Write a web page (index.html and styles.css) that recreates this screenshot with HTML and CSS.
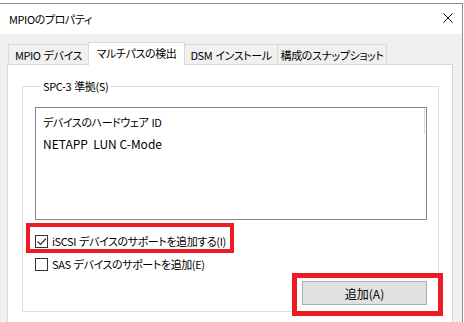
FILE: index.html
```html
<!DOCTYPE html>
<html lang="ja">
<head>
  <meta charset="UTF-8">
  <title>MPIOのプロパティ</title>
  <link rel="stylesheet" href="styles.css">
</head>
<body>
  <div class="window">
    <div class="titlebar">
      <span class="title">MPIOのプロパティ</span>
      <svg class="close" width="10" height="10" viewBox="0 0 10 10">
        <path d="M0.5 0.5 L9.5 9.5 M9.5 0.5 L0.5 9.5" stroke="#111" stroke-width="1" fill="none"/>
      </svg>
    </div>
    <div class="client">
      <div class="tabs">
        <div class="tab t1">MPIO デバイス</div>
        <div class="tab t2 active">マルチパスの検出</div>
        <div class="tab t3">DSM インストール</div>
        <div class="tab t4">構成のスナップショット</div>
      </div>
      <div class="panel">
        <fieldset class="group">
          <legend>SPC-3 準拠(S)</legend>
          <div class="listbox">
            <div class="item">デバイスのハードウェア ID</div>
            <div class="item latin">NETAPP&nbsp; LUN C-Mode</div>
          </div>
          <label class="check first">
            <span class="box">
              <svg width="11" height="11" viewBox="0 0 11 11">
                <path d="M1.5 5.5 L4.5 8.5 L10 2.5" stroke="#333" stroke-width="1.2" fill="none"/>
              </svg>
            </span>
            iSCSI デバイスのサポートを追加する(I)
          </label>
          <label class="check">
            <span class="box"></span>
            SAS デバイスのサポートを追加(E)
          </label>
          <div class="actions">
            <button class="btn">追加(A)</button>
          </div>
        </fieldset>
        <!-- red annotation boxes -->
        <div class="mark mark-check"></div>
        <div class="mark mark-btn"></div>
      </div>
    </div>
  </div>
</body>
</html>
```

FILE: styles.css
```css
body {
  margin: 0;
  width: 464px;
  height: 322px;
  overflow: hidden;
  background: #fff;
  color: #000;
  font-family: "Noto Sans CJK JP", "Noto Sans", sans-serif;
  font-size: 11px;
  font-feature-settings: "palt";
  letter-spacing: -0.4px;
  word-spacing: 1px;
}
.window {
  margin-top: 3px;
  width: 463px;
  height: 319px;
  box-sizing: border-box;
  border-top: 1px solid #8c8c8c;
  border-right: 1px solid #8c8c8c;
  display: flex;
  flex-direction: column;
}
.titlebar {
  height: 30px;
  background: #fff;
  display: flex;
  align-items: center;
  padding-left: 9px;
}
.title {
  line-height: 16px;
  margin-top: -1px;
}
.close {
  margin-left: auto;
  margin-right: 9px;
  margin-top: -2px;
}
.client {
  flex: 1;
  background: #f0f0f0;
  padding: 8px 9px 0 7px;
  display: flex;
  flex-direction: column;
}
.tabs {
  display: flex;
  align-items: flex-end;
  height: 22px;
  padding-left: 1px;
}
.tab {
  height: 20px;
  box-sizing: border-box;
  border: 1px solid #d9d9d9;
  border-bottom: none;
  margin-right: -1px;
  background: #f0f0f0;
  display: flex;
  align-items: center;
  justify-content: center;
  white-space: nowrap;
  line-height: 16px;
}
.t1 { width: 81px; }
.t2 { width: 97px; }
.t3 { width: 94px; }
.t4 { width: 110px; }
.tab.active {
  height: 23px;
  margin-bottom: -1px;
  padding-bottom: 3px;
  background: #fff;
  position: relative;
  z-index: 1;
}
.panel {
  flex: 1;
  position: relative;
  background: #fff;
  border: 1px solid #d9d9d9;
  border-bottom: none;
}
.group {
  margin: 13px 13px 0 14px;
  padding: 13px 11px 6px 12px;
  border: 1px solid #dcdcdc;
  min-width: 0;
}
.group legend {
  margin-left: 6px;
  padding: 0 2px;
  line-height: 16px;
}
.listbox {
  position: relative;
  height: 113px;
  box-sizing: border-box;
  border: 1px solid #828790;
  padding: 4px 7px 0;
}
.listbox::after {
  content: "";
  position: absolute;
  right: 1px;
  top: 0;
  width: 1px;
  height: 26px;
  background: #d8d8d8;
}
.item {
  line-height: 21px;
  white-space: nowrap;
}
.item.latin {
  font-size: 12px;
  letter-spacing: 0;
  word-spacing: 0;
}
.check {
  display: flex;
  align-items: center;
  height: 20px;
  margin-top: 3px;
  white-space: nowrap;
}
.check.first {
  margin-top: 11px;
}
.box {
  width: 13px;
  height: 13px;
  box-sizing: border-box;
  border: 1px solid #333;
  background: #fff;
  margin-right: 4px;
  display: flex;
  align-items: center;
  justify-content: center;
}
.actions {
  display: flex;
  justify-content: flex-end;
  margin-top: 7px;
}
.btn {
  width: 125px;
  height: 24px;
  box-sizing: border-box;
  border: 1px solid #adadad;
  background: #e1e1e1;
  font-family: inherit;
  font-size: 12px;
  letter-spacing: 0;
  color: #000;
  padding: 0;
}
.mark {
  position: absolute;
  box-sizing: border-box;
  border: 4px solid #ed1c24;
}
.mark-check {
  left: 18px;
  top: 158px;
  width: 208px;
  height: 30px;
}
.mark-btn {
  left: 284px;
  top: 208px;
  width: 151px;
  height: 43px;
  border-width: 5px;
}
```
